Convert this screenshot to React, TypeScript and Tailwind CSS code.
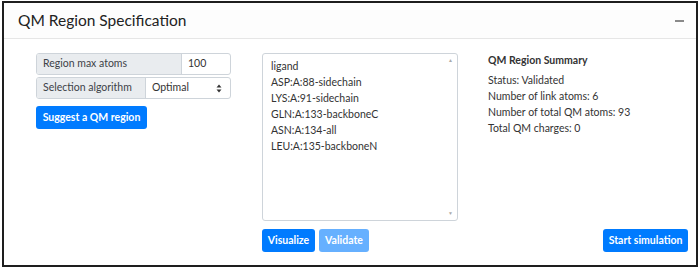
import React from 'react';

const residues = [
    'ligand',
    'ASP:A:88-sidechain',
    'LYS:A:91-sidechain',
    'GLN:A:133-backboneC',
    'ASN:A:134-all',
    'LEU:A:135-backboneN',
];

const summary = [
    'Status: Validated',
    'Number of link atoms: 6',
    'Number of total QM atoms: 93',
    'Total QM charges: 0',
];

function SelectArrows() {
    return (
        <svg width="6" height="9" viewBox="0 0 6 9" className="text-[#333]">
            <path d="M3 0.5 L5.5 3.6 L0.5 3.6 Z" fill="currentColor" />
            <path d="M3 8.5 L5.5 5.4 L0.5 5.4 Z" fill="currentColor" />
        </svg>
    );
}

export default function App() {
    return (
        <div
            className="w-[700px] h-[268px] bg-white pt-[1px] pl-[2px]"
            style={{ fontFamily: 'Lato, "Open Sans", sans-serif' }}
        >
            <div className="w-[696px] h-[266px] border-2 border-[#1e1e1e] flex flex-col text-[#212529]">
                {/* header */}
                <div className="h-[36px] flex items-center justify-between pl-[14px] pr-[10px] border-b border-[#e6e6e6] bg-[#fdfdfd]">
                    <span className="text-[15.5px] leading-none text-[#222]">QM Region Specification</span>
                    <span className="w-[9px] h-[2px] bg-[#8a8a8a] mr-[2px]" />
                </div>

                {/* body */}
                <div className="flex flex-1 pt-[14px] pb-[13px]">
                    {/* left column */}
                    <div className="ml-[32px] w-[195px] flex flex-col">
                        <div className="flex h-[22px] border border-[#ced4da] rounded-[3px] overflow-hidden text-[10.5px]">
                            <div className="w-[145px] bg-[#e9ecef] border-r border-[#ced4da] flex items-center pl-[6px] text-[#3d4247]">
                                Region max atoms
                            </div>
                            <div className="flex-1 flex items-center pl-[6px] text-[#333]">100</div>
                        </div>
                        <div className="flex h-[22px] mt-[2px] border border-[#ced4da] rounded-[3px] overflow-hidden text-[10.5px]">
                            <div className="w-[109px] bg-[#e9ecef] border-r border-[#ced4da] flex items-center pl-[6px] text-[#3d4247]">
                                Selection algorithm
                            </div>
                            <div className="flex-1 flex items-center justify-between pl-[6px] pr-[8px] text-[#333]">
                                <span>Optimal</span>
                                <SelectArrows />
                            </div>
                        </div>
                        <button className="mt-[7px] w-[111px] h-[23px] rounded-[3px] bg-[#007bff] text-white text-[10.5px] font-bold">
                            Suggest a QM region
                        </button>
                    </div>

                    {/* middle column */}
                    <div className="ml-[31px] w-[196px] flex flex-col">
                        <div className="relative h-[168px] border border-[#ced4da] rounded-[3px] pt-[4px] pl-[8px] text-[10.5px] leading-[16px] text-[#333]">
                            {residues.map((r) => (
                                <div key={r}>{r}</div>
                            ))}
                            <span className="absolute right-[4px] top-[4px] text-[5px] text-[#aaa] leading-none">▲</span>
                            <span className="absolute right-[4px] bottom-[4px] text-[5px] text-[#aaa] leading-none">▼</span>
                        </div>
                        <div className="flex gap-[4px] mt-[8px]">
                            <button className="w-[53px] h-[23px] rounded-[3px] bg-[#007bff] text-white text-[10.5px] font-bold">
                                Visualize
                            </button>
                            <button className="w-[50px] h-[23px] rounded-[3px] bg-[#66b0ff] text-white text-[10.5px] font-bold">
                                Validate
                            </button>
                        </div>
                    </div>

                    {/* right column */}
                    <div className="ml-[30px] mr-[8px] flex-1 flex flex-col">
                        <div className="text-[10.5px] text-[#333]">
                            <div className="font-bold leading-[14px]">QM Region Summary</div>
                            <div className="mt-[5px] leading-[16px]">
                                {summary.map((s) => (
                                    <div key={s}>{s}</div>
                                ))}
                            </div>
                        </div>
                        <div className="mt-auto flex justify-end">
                            <button className="w-[85px] h-[23px] rounded-[3px] bg-[#007bff] text-white text-[10.5px] font-bold">
                                Start simulation
                            </button>
                        </div>
                    </div>
                </div>
            </div>
        </div>
    );
}
